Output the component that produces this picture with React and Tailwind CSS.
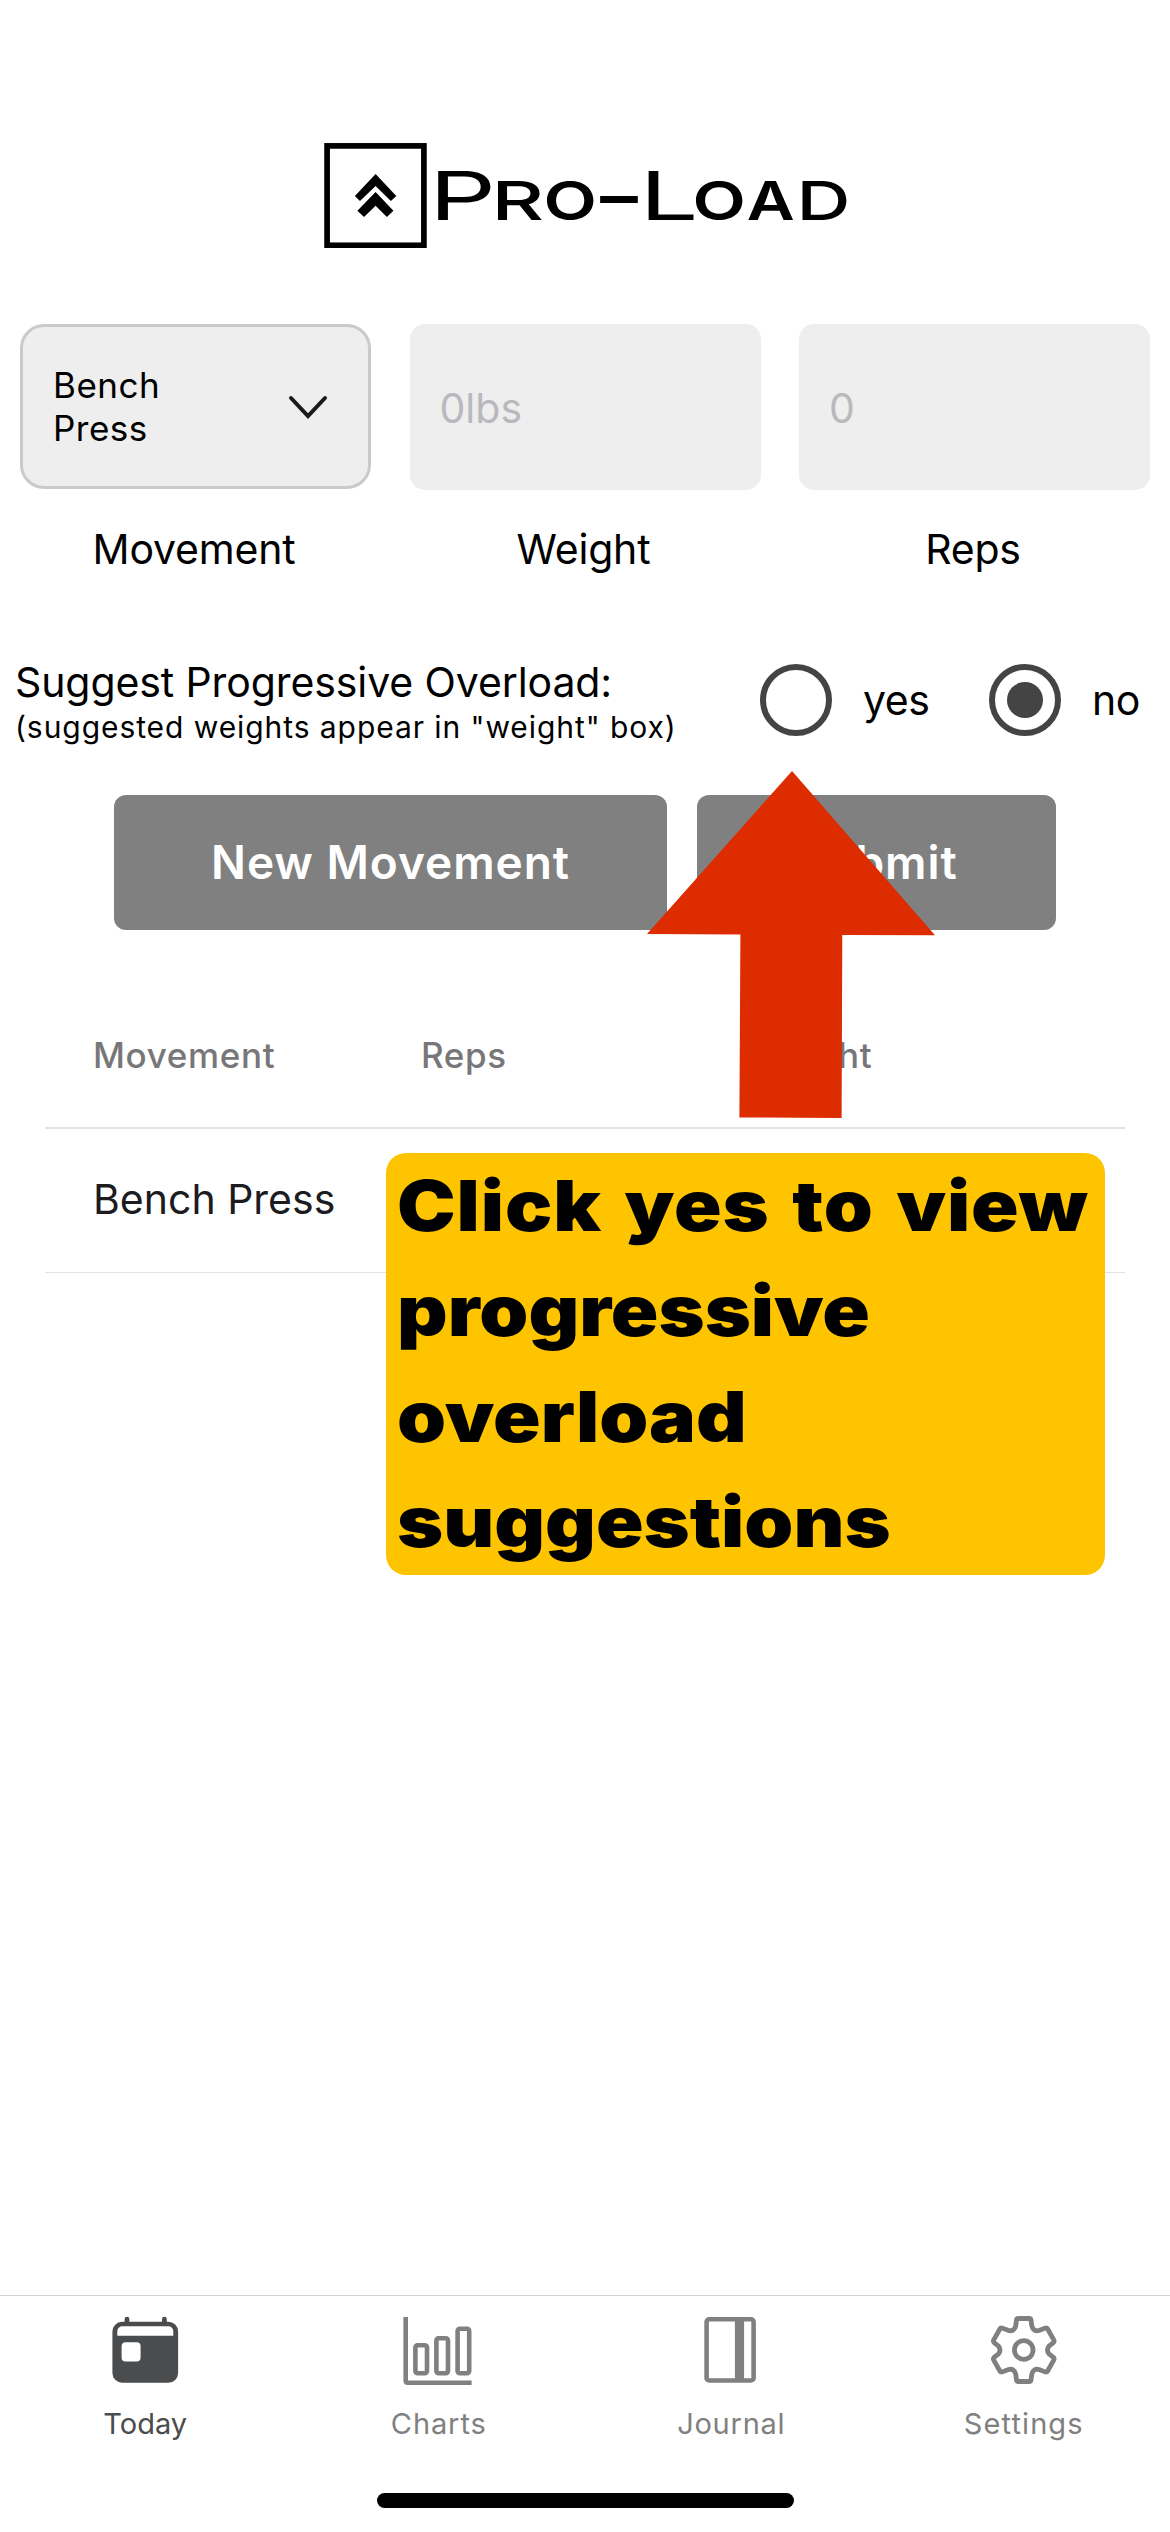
const LOGO_LETTERS = [
  { ch: "P", x: 105, y: 77, size: 67, len: 67, weight: 400 },
  { ch: "R", x: 167.5, y: 77, size: 54, len: 52.5, weight: 500 },
  { ch: "O", x: 219.5, y: 77, size: 54, len: 53.4, weight: 600 },
  { ch: "-", x: 268.5, y: 71.5, size: 54, len: 53, weight: 800 },
  { ch: "L", x: 315.5, y: 77, size: 67, len: 59, weight: 400 },
  { ch: "O", x: 368.5, y: 77, size: 54, len: 53.4, weight: 600 },
  { ch: "A", x: 422.8, y: 77, size: 54, len: 47.9, weight: 600 },
  { ch: "D", x: 472.5, y: 77, size: 54, len: 54, weight: 500 },
];

function Logo() {
  return (
    <svg className="ml-[324px] h-[105px] w-[530px]" viewBox="0 0 530 105" aria-label="Pro-Load">
      <rect x="3.1" y="2.9" width="96.8" height="99.4" fill="none" stroke="#000" strokeWidth="5.7" />
      <path d="M51.6 31 72.3 53 66.9 58 51.6 43 36 58 30.9 53Z" />
      <path d="M51.6 49 69.4 67.7 62.9 74 51.6 62.7 40 74 33.4 67.7Z" />
      {LOGO_LETTERS.map((l, i) => (
        <text
          key={i}
          x={l.x}
          y={l.y}
          fontFamily="Inter, sans-serif"
          fontSize={l.size}
          fontWeight={l.weight}
          textLength={l.len}
          lengthAdjust="spacingAndGlyphs"
        >
          {l.ch}
        </text>
      ))}
    </svg>
  );
}

function Field({ label, children }) {
  return (
    <div className="flex w-[351px] flex-col">
      <div className="h-[166px]">{children}</div>
      <div className="mt-[34px] pr-[3px] text-center text-[41px] leading-[50px] tracking-[-0.2px]">{label}</div>
    </div>
  );
}

function Radio({ checked, label, className }) {
  return (
    <div className={"flex h-[72px] items-center " + className}>
      <div className="flex size-[72px] items-center justify-center rounded-full border-[6px] border-[#444444]">
        {checked && <div className="size-[36px] rounded-full bg-[#444444]" />}
      </div>
      <span className="ml-[31px] text-[41px] leading-[50px] tracking-[-0.4px]">{label}</span>
    </div>
  );
}

function TodayIcon() {
  return (
    <svg className="size-[70px] overflow-visible" viewBox="0 0 70 70" fill="#4b4c4e">
      <path d="M13.6 8V3.2a2.4 2.4 0 0 1 4.8 0V8ZM51 8V3.2a2.4 2.4 0 0 1 4.8 0V8Z" />
      <path
        fillRule="evenodd"
        d="M11 5.7H57.3a9.8 9.8 0 0 1 9.8 9.8V57a9.8 9.8 0 0 1-9.8 9.8H11A9.8 9.8 0 0 1 1.4 57V15.5A9.8 9.8 0 0 1 11 5.7ZM11.3 10.3a5 5 0 0 0-5 5V19.7H62.3V15.3a5 5 0 0 0-5-5ZM14.6 26.3a4 4 0 0 0-4 4V41.6a4 4 0 0 0 4 4H25.6a4 4 0 0 0 4-4V30.3a4 4 0 0 0-4-4Z"
      />
    </svg>
  );
}

function ChartsIcon() {
  return (
    <svg className="size-[70px] overflow-visible" viewBox="0 0 70 70" fill="none" stroke="#808080" strokeWidth="4.6">
      <path d="M1.7 1V64.5Q1.7 66.7 3.9 66.7H67.6" />
      <rect x="11.4" y="29.3" width="11.6" height="28" rx="2.2" />
      <rect x="32.4" y="22.3" width="11.6" height="35" rx="2.2" />
      <rect x="53.6" y="12.7" width="11.6" height="44.6" rx="2.2" />
    </svg>
  );
}

function JournalIcon() {
  return (
    <svg className="size-[70px] overflow-visible" viewBox="0 0 70 70" fill="none" stroke="#808080" strokeWidth="4.6">
      <rect x="10.6" y="3.3" width="47" height="61.2" rx="2.6" />
      <path d="M43.5 3V65" strokeWidth="9.2" />
    </svg>
  );
}

function SettingsIcon() {
  return (
    <svg
      className="size-[70px] overflow-visible"
      viewBox="-1.75 0 70 70"
      fill="none"
      stroke="#808080"
      strokeWidth="4.8"
      strokeLinejoin="round"
    >
      <circle cx="33" cy="34" r="9.3" />
      <path d="M27.6 2.5H38.4Q40.1 2.5 40.3 4.3L41 9.6Q42.6 16.2 48.9 14.3L54.3 12.1Q56 11.4 56.9 13L63 23.9Q63.9 25.6 62.4 26.8L58.2 30.2Q55.3 34 58.2 37.8L62.4 41.2Q63.9 42.4 63 44.1L56.9 55Q56 56.6 54.3 55.9L48.9 53.7Q42.6 51.8 41 58.4L40.3 63.7Q40.1 65.5 38.4 65.5H27.6Q25.9 65.5 25.7 63.7L25 58.4Q23.4 51.8 17.1 53.7L11.7 55.9Q10 56.6 9.1 55L3 44.1Q2.1 42.4 3.6 41.2L7.8 37.8Q10.7 34 7.8 30.2L3.6 26.8Q2.1 25.6 3 23.9L9.1 13Q10 11.4 11.7 12.1L17.1 14.3Q23.4 16.2 25 9.6L25.7 4.3Q25.9 2.5 27.6 2.5Z" />
    </svg>
  );
}

function Tab({ icon, label, className }) {
  return (
    <div className="flex flex-1 flex-col items-center">
      {icon}
      <span className={"mt-[18px] text-[29px] leading-[39px] " + className}>{label}</span>
    </div>
  );
}

export default function App() {
  return (
    <div className="relative flex h-[2532px] w-[1170px] flex-col overflow-hidden bg-white pt-[143px] font-['Inter',sans-serif] text-black">
      <Logo />

      <div className="mt-[76px] flex justify-between pr-[20px] pl-[20px]">
        <Field label="Movement">
          <div className="flex h-[165px] items-center justify-between rounded-[24px] border-[3px] border-[#cacaca] bg-[#eeeeee] pr-[39px] pl-[30px]">
            <span className="w-[130px] text-[35px] leading-[43px] tracking-[0.5px]">Bench Press</span>
            <svg className="h-[24px] w-[42px]" viewBox="0 0 42 24" fill="none" stroke="#1a1a1a" strokeWidth="4" strokeLinecap="round">
              <path d="M4 3 21 21 38 3" />
            </svg>
          </div>
        </Field>
        <Field label="Weight">
          <div className="flex h-full items-center rounded-[15px] bg-[#eeeeee] pt-[3px] pl-[30px] text-[41px] text-[#b9b9bd]">0lbs</div>
        </Field>
        <Field label="Reps">
          <div className="flex h-full items-center rounded-[15px] bg-[#eeeeee] pt-[3px] pl-[30px] text-[41px] text-[#b9b9bd]">0</div>
        </Field>
      </div>

      <div className="mt-[84px] flex pl-[15px]">
        <div className="w-[745px]">
          <div className="text-[41px] leading-[48px] tracking-[-0.1px]">Suggest Progressive Overload:</div>
          <div className="text-[30px] leading-[42px] tracking-[0.93px]">(suggested weights appear in "weight" box)</div>
        </div>
        <Radio label="yes" className="mt-[6px] w-[229px]" />
        <Radio label="no" checked className="mt-[6px]" />
      </div>

      <div className="mt-[47px] flex gap-[30px] pl-[114px] text-[46px] font-semibold tracking-[0.95px] text-white">
        <div className="flex h-[135px] w-[553px] items-center justify-center rounded-[12px] bg-[#808080]">New Movement</div>
        <div className="flex h-[135px] w-[359px] items-center justify-center rounded-[12px] bg-[#808080]">Submit</div>
      </div>

      <div className="mx-[45px] mt-[53px]">
        <div className="flex h-[146px] items-center border-b-2 border-[#e7e0ec] pl-[48px] text-[35px] font-medium tracking-[0.65px] text-[#77777a]">
          <span className="w-[328px]">Movement</span>
          <span className="w-[330px]">Reps</span>
          <span>Weight</span>
        </div>
        <div className="flex h-[144px] items-center border-b border-[#e7e0ec] pb-[2px] pl-[48px] text-[41px] text-[#1c1b1f]">
          Bench Press
        </div>
      </div>

      <svg className="absolute top-[771px] left-[647px] h-[347px] w-[288px]" viewBox="0 0 288 347" fill="#dd2c00">
        <path d="M145 0 288 164.3 195.3 164 194.6 347 92.4 346.4 93.4 163.5 0 163Z" />
      </svg>
      <div className="absolute top-[1153px] left-[386px] h-[422px] w-[719px] rounded-[20px] bg-[#ffc400] pl-[11px]">
        <div className="w-fit origin-left scale-x-[1.122] text-[70px] leading-[105.4px] font-black whitespace-nowrap">
          <div className="tracking-[0.8px] [word-spacing:5.5px]">Click yes to view</div>
          <div>progressive</div>
          <div>overload</div>
          <div>suggestions</div>
        </div>
      </div>

      <div className="mt-auto flex flex-col border-t border-[#d3d3d3] pt-[20px] pb-[24px]">
        <div className="flex">
          <Tab icon={<TodayIcon />} label="Today" className="pr-[2px] text-[#4b4c4e]" />
          <Tab icon={<ChartsIcon />} label="Charts" className="tracking-[0.9px] text-[#808080]" />
          <Tab icon={<JournalIcon />} label="Journal" className="tracking-[0.75px] text-[#808080]" />
          <Tab icon={<SettingsIcon />} label="Settings" className="tracking-[1.1px] text-[#808080]" />
        </div>
        <div className="mt-[50px] ml-[377px] h-[15px] w-[417px] rounded-full bg-black" />
      </div>
    </div>
  );
}
